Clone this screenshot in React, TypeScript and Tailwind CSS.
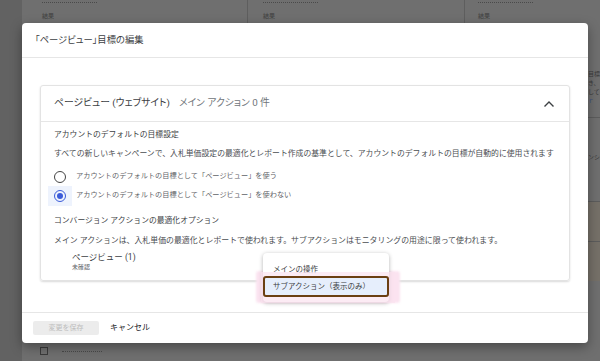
import React from "react";

const font = { fontFamily: 'Roboto, "Noto Sans CJK JP", sans-serif' } as React.CSSProperties;
const palt = { fontFeatureSettings: '"palt"' } as React.CSSProperties;

function Radio({ checked, label }: { checked?: boolean; label: string }) {
  return (
    <div className="flex items-center h-[19px]">
      <div className={"w-[24px] h-[20px] flex items-center justify-center ml-[-6px] " + (checked ? "bg-[#eef3fd]" : "")}>
        <div className={"w-[12px] h-[12px] rounded-full border-[1.5px] flex items-center justify-center " + (checked ? "border-[#3b5bd9]" : "border-[#444]")}>
          {checked && <div className="w-[6px] h-[6px] rounded-full bg-[#3b5bd9]" />}
        </div>
      </div>
      <span className="ml-[4px] text-[7.2px] text-[#5f6368]">{label}</span>
    </div>
  );
}

export default function App() {
  return (
    <div className="relative w-[600px] h-[361px] overflow-hidden bg-[#6f6f6f]" style={font}>
      {/* background page */}
      <div className="flex h-full">
        <div className="w-[22px] h-full bg-[#626262]" />
        <div className="flex-1 flex flex-col">
          <div className="flex h-[23px]">
            <div className="w-[226px] border-r border-[#5e5e5e] pl-[20px] pt-[2px]">
              <div className="w-[55px] border-t border-dotted border-[#4a4a4a]" />
              <div className="text-[6px] text-[#3f3f3f] mt-[8px]">結果</div>
            </div>
            <div className="w-[217px] border-r border-[#5e5e5e] pl-[15px] pt-[2px]">
              <div className="w-[55px] border-t border-dotted border-[#4a4a4a]" />
              <div className="text-[6px] text-[#3f3f3f] mt-[8px]">結果</div>
            </div>
            <div className="flex-1 pl-[13px] pt-[2px]">
              <div className="w-[55px] border-t border-dotted border-[#4a4a4a]" />
              <div className="text-[6px] text-[#3f3f3f] mt-[8px]">結果</div>
            </div>
          </div>
          <div className="flex-1 flex justify-end">
            <div className="w-[12px] flex flex-col text-[6px] text-[#3a3a3a] leading-[9px] pt-[46px]">
              <div>目標</div>
              <div>き、</div>
              <div>して</div>
              <div className="text-[#3a4f80]">ｒ</div>
              <div className="border-t border-[#5c5c5c] mt-[12px] h-[35px]" />
              <div>ンシ</div>
              <div className="border-t border-[#5c5c5c] mt-[40px] h-[40px] bg-[#757068]" />
              <div className="border-t border-[#5c5c5c] h-[40px] bg-[#757068]" />
            </div>
          </div>
        </div>
      </div>
      <div className="absolute left-[40px] top-[347px] flex items-center gap-[14px]">
        <div className="w-[8px] h-[8px] border border-[#3a3a3a]" />
        <div className="w-[40px] border-t border-dotted border-[#4a4a4a]" />
      </div>

      {/* modal */}
      <div className="absolute left-[22px] top-[23px] w-[566px] h-[320px] bg-white rounded-[4px] shadow-[0_4px_12px_rgba(0,0,0,0.35)] flex flex-col">
        <div className="h-[35px] border-b border-[#e6e6e6] flex items-center pl-[13px]">
          <span className="text-[9.3px] text-[#3c4043]" style={palt}>「ページビュー」目標の編集</span>
        </div>
        <div className="flex-1 px-[18px] pt-[27px]">
          <div className="relative border border-[#e3e3e3] rounded-[3px] shadow-[0_1px_2px_rgba(0,0,0,0.15)] h-[196px]">
            <div className="h-[36px] border-b border-[#e6e6e6] flex items-center pl-[13px] pr-[14px]" style={palt}>
              <span className="text-[9.8px] text-[#3c4043]">ページビュー (ウェブサイト)</span>
              <span className="text-[9.8px] text-[#70757a] ml-[9px]">メイン アクション 0 件</span>
              <svg className="ml-auto" width="12" height="8" viewBox="0 0 12 8">
                <path d="M1.5 6.5 L6 2 L10.5 6.5" stroke="#3c4043" strokeWidth="1.4" fill="none" />
              </svg>
            </div>
            <div className="pl-[13px] pt-[3px]">
              <div className="text-[7.8px] text-[#3c4043] h-[19px] flex items-center">アカウントのデフォルトの目標設定</div>
              <div className="text-[7.85px] text-[#4a4d51] h-[19px] flex items-center">すべての新しいキャンペーンで、入札単価設定の最適化とレポート作成の基準として、アカウントのデフォルトの目標が自動的に使用されます</div>
              <div className="mt-[4px]">
                <Radio label="アカウントのデフォルトの目標として「ページビュー」を使う" />
                <Radio checked label="アカウントのデフォルトの目標として「ページビュー」を使わない" />
              </div>
              <div className="text-[7.8px] text-[#3c4043] h-[18px] flex items-center mt-[7px]">コンバージョン アクションの最適化オプション</div>
              <div className="text-[7.9px] text-[#4a4d51] h-[20px] flex items-center mt-[1px]">メイン アクションは、入札単価の最適化とレポートで使われます。サブアクションはモニタリングの用途に限って使われます。</div>
              <div className="pl-[18px] mt-[2px] leading-none">
                <div className="text-[8.5px] text-[#3c4043]">ページビュー (1)</div>
                <div className="text-[6px] text-[#5f6368] mt-[2px]">未確認</div>
              </div>
            </div>
          </div>
        </div>
        <div className="h-[31px] border-t border-[#e6e6e6] flex items-center pl-[11px] gap-[11px]">
          <div className="w-[66px] h-[14px] bg-[#ececec] rounded-[2px] flex items-center justify-center text-[7px] text-[#bdbdbd]">変更を保存</div>
          <span className="text-[8px] text-[#202124]">キャンセル</span>
        </div>
      </div>

      {/* dropdown menu */}
      <div className="absolute left-[256px] top-[271px] w-[144px] h-[32px] bg-[#fbe3f0] rounded-[3px] blur-[1px]" />
      <div className="absolute left-[263px] top-[253px] w-[126px] h-[49px] bg-white rounded-[4px] shadow-[0_1px_4px_rgba(0,0,0,0.3)] flex flex-col pt-[10px]">
        <div className="text-[7.5px] text-[#3c4043] pl-[10px] h-[14px] flex items-center">メインの操作</div>
        <div className="relative mt-[-1px] h-[21px]">
          <div className="absolute left-[-2px] right-[-6px] top-[-4px] bottom-[-6px] bg-[#fbe3f0]/70" />
          <div className="relative h-full border-2 border-[#6b3f12] rounded-[3px] bg-[#e6eefc] flex items-center pl-[8px] text-[7.5px] text-[#3c4043]">サブアクション（表示のみ）</div>
        </div>
      </div>
    </div>
  );
}
